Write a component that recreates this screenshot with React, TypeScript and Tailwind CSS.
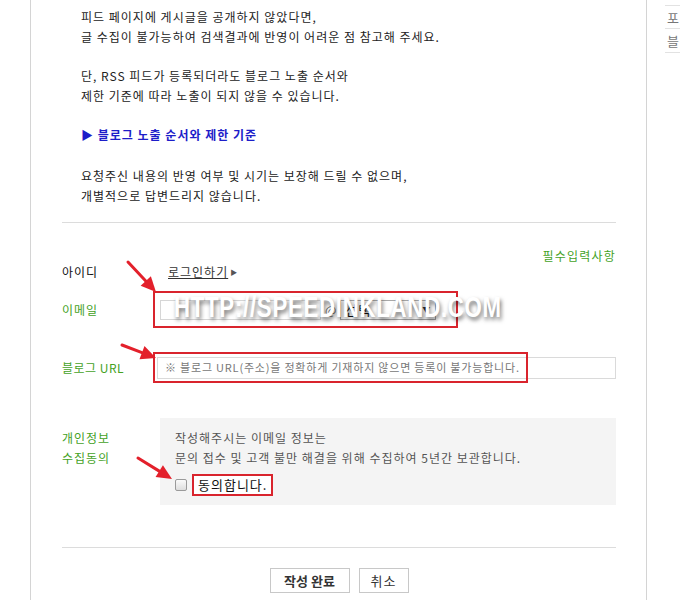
import React from 'react';

const FONT = { fontFamily: '"Noto Sans CJK KR", "Noto Sans", sans-serif' };

// 빨간 화살표 (from -> to)
function Arrow({ x1, y1, x2, y2 }: { x1: number; y1: number; x2: number; y2: number }) {
  const dx = x2 - x1;
  const dy = y2 - y1;
  const len = Math.sqrt(dx * dx + dy * dy);
  const ux = dx / len;
  const uy = dy / len;
  const head = 15;
  const half = 7;
  const bx = x2 - ux * head;
  const by = y2 - uy * head;
  const pts = `${x2},${y2} ${bx - uy * half},${by + ux * half} ${bx + uy * half},${by - ux * half}`;
  return (
    <g>
      <line x1={x1} y1={y1} x2={bx} y2={by} stroke="#e3202b" strokeWidth={3} strokeLinecap="round" />
      <polygon points={pts} fill="#e3202b" />
    </g>
  );
}

export default function App() {
  return (
    <div className="relative w-[680px] h-[600px] overflow-hidden bg-white text-[12px] tracking-[1px] text-[#222]" style={FONT}>
      <div className="flex h-full">
        {/* 본문 */}
        <div className="ml-[30px] w-[620px] h-full border-l border-r border-[#d4d4d4] pl-[31px] pr-[30px]">
          <div className="pl-[19px] pt-[7px] leading-[20px]">
            <p>피드 페이지에 게시글을 공개하지 않았다면,</p>
            <p>글 수집이 불가능하여 검색결과에 반영이 어려운 점 참고해 주세요.</p>
            <p className="mt-[19px]">단, RSS 피드가 등록되더라도 블로그 노출 순서와</p>
            <p>제한 기준에 따라 노출이 되지 않을 수 있습니다.</p>
            <p className="mt-[19px] font-bold text-[#1d1dc9]">▶ 블로그 노출 순서와 제한 기준</p>
            <p className="mt-[21px]">요청주신 내용의 반영 여부 및 시기는 보장해 드릴 수 없으며,</p>
            <p>개별적으로 답변드리지 않습니다.</p>
          </div>

          <div className="mt-[16px] border-t border-[#dcdcdc]" />

          <div className="mt-[25px] h-[16px] leading-[16px] text-right text-[#45a21f] tracking-[1.2px]">필수입력사항</div>

          {/* 아이디 */}
          <div className="flex items-center h-[16px] leading-[16px]">
            <div className="w-[106px] text-[#111]">아이디</div>
            <span className="underline text-[#333]">로그인하기</span>
            <span className="ml-[2px] text-[7px] text-[#555]">▶</span>
          </div>

          {/* 이메일 */}
          <div className="relative flex items-center h-[37px] mt-[11px]">
            <div className="w-[98px] text-[#45a21f]">이메일</div>
            <div className="w-[161px] h-[20px] border border-[#d6d6d6] bg-white" />
            <span className="mx-[4px] text-[#666] tracking-normal">@</span>
            <div className="flex items-center justify-between w-[96px] h-[20px] border border-[#a9a9a9] bg-white px-[4px]">
              <span className="text-[13px] text-[#111]">선택</span>
              <span className="text-[8px] text-[#333]">▼</span>
            </div>
            <div className="absolute left-[91px] top-0 w-[305px] h-[37px] border-2 border-[#d9242d]" />
          </div>

          {/* 블로그 URL */}
          <div className="relative flex items-center h-[31px] mt-[24px]">
            <div className="w-[95px] text-[#45a21f] tracking-[0.5px]">블로그 URL</div>
            <div className="flex items-center flex-1 h-[22px] border border-[#dadada] bg-white pl-[7px] text-[11px] text-[#777] tracking-[0.8px]">
              ※ 블로그 URL(주소)을 정확하게 기재하지 않으면 등록이 불가능합니다.
            </div>
            <div className="absolute left-[91px] top-0 w-[375px] h-[31px] border-2 border-[#d9242d]" />
          </div>

          {/* 개인정보 수집동의 */}
          <div className="flex mt-[35px]">
            <div className="w-[98px] pt-[10px] leading-[20px] text-[#45a21f]">
              <p>개인정보</p>
              <p>수집동의</p>
            </div>
            <div className="flex-1 h-[87px] bg-[#f4f4f4] pl-[15px] pt-[10px] leading-[20px] text-[#555]">
              <p>작성해주시는 이메일 정보는</p>
              <p>문의 접수 및 고객 불만 해결을 위해 수집하여 5년간 보관합니다.</p>
              <div className="flex items-center mt-[6px]">
                <div className="w-[12px] h-[12px] rounded-[2px] border border-[#9a9a9a] bg-gradient-to-b from-[#fafafa] to-[#dedede]" />
                <div className="ml-[5px] flex items-center h-[22px] px-[4px] border-2 border-[#d9242d] bg-white text-[13px] text-[#111]">
                  동의합니다.
                </div>
              </div>
            </div>
          </div>

          <div className="mt-[42px] border-t border-[#dcdcdc]" />

          <div className="flex justify-center gap-[9px] mt-[20px]">
            <button className="w-[80px] h-[25px] border border-[#c8c8c8] bg-white font-bold text-[13px] text-[#333] tracking-normal">
              작성 완료
            </button>
            <button className="w-[50px] h-[25px] border border-[#c8c8c8] bg-white text-[13px] text-[#333]">
              취소
            </button>
          </div>
        </div>

        {/* 오른쪽 사이드 */}
        <div className="ml-[18px] flex-1 pt-[5px] text-[13px] text-[#777]">
          <div className="h-[24px] leading-[24px] border-t border-b border-[#e2e2e2] pl-[2px]">포</div>
          <div className="h-[24px] leading-[24px] border-b border-[#e2e2e2] pl-[2px]">블</div>
        </div>
      </div>

      {/* 워터마크 */}
      <div
        className="absolute left-[174px] top-[284px] origin-left scale-x-[0.74] text-[30px] font-black tracking-[1px] text-white [text-shadow:2px_3px_5px_rgba(0,0,0,0.55)] pointer-events-none"
        style={{ fontFamily: '"Liberation Sans", Arial, sans-serif' }}
      >
        HTTP://SPEEDINKLAND.COM
      </div>

      {/* 화살표 */}
      <svg className="absolute left-0 top-0 pointer-events-none" width={680} height={600}>
        <Arrow x1={128} y1={262} x2={156} y2={292} />
        <Arrow x1={122} y1={345} x2={156} y2={358} />
        <Arrow x1={138} y1={458} x2={172} y2={479} />
      </svg>
    </div>
  );
}
